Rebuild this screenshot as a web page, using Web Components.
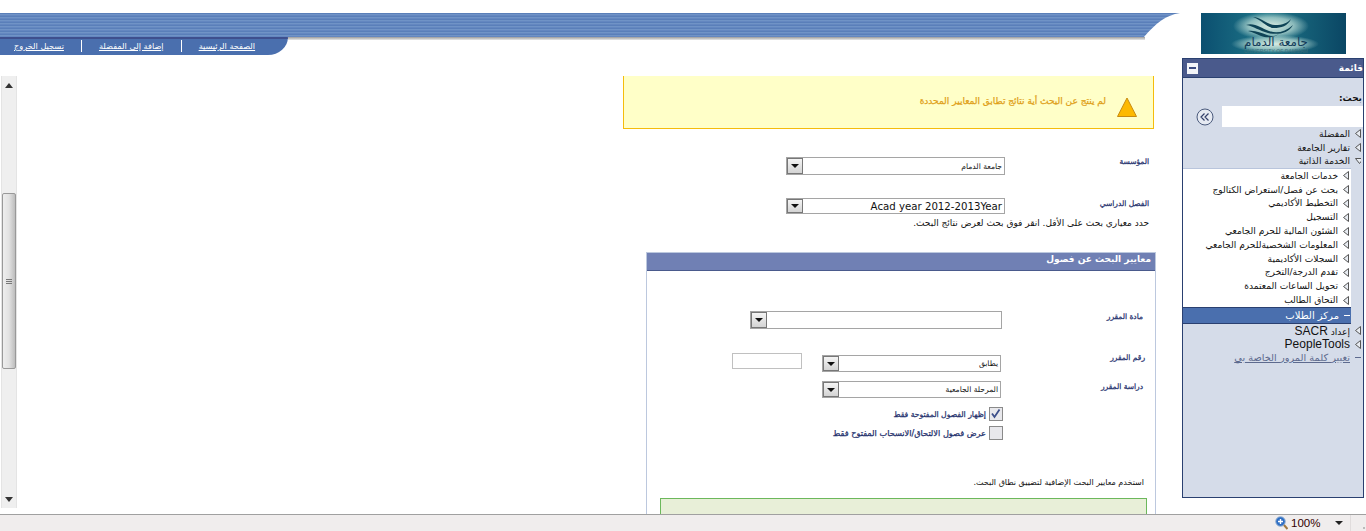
<!DOCTYPE html>
<html lang="ar">
<head>
<meta charset="utf-8">
<title>Class search</title>
<style>
    html, body { margin: 0; height: 100%; background: #fff; }
    body { overflow: hidden; font-family: "Liberation Sans", "DejaVu Sans", sans-serif; font-size: 10px; }
</style>
</head>
<body>
<page-shell>
    <site-header slot="header"></site-header>
    <v-scrollbar slot="scrollbar"></v-scrollbar>

    <alert-box slot="content">لم ينتج عن البحث أية نتائج تطابق المعايير المحددة</alert-box>
    <form-row slot="content" label="المؤسسة" label-width="149" label-pad="5" label-top="-1" gap="20" top="28">
        <drop-select width="219" height="18" value="جامعة الدمام"></drop-select>
    </form-row>
    <form-row slot="content" label="الفصل الدراسي" label-width="149" label-pad="5" gap="21" top="23">
        <drop-select width="219" height="16" latin value="Acad year 2012-2013Year"></drop-select>
    </form-row>
    <hint-text slot="content" right="5" top="3" size="9">حدد معياري بحث على الأقل. انقر فوق بحث لعرض نتائج البحث.</hint-text>

    <search-panel slot="content" heading="معايير البحث عن فصول">
        <form-row label="مادة المقرر" label-width="153" label-pad="12" gap="18" top="40">
            <drop-select width="252" height="18"></drop-select>
        </form-row>
        <form-row label="رقم المقرر" label-width="154" label-pad="10" label-top="-3" gap="20" top="26">
            <drop-select width="179" height="17" value="يطابق"></drop-select>
            <text-box></text-box>
        </form-row>
        <form-row label="دراسة المقرر" label-width="154" label-pad="12" gap="19" top="9">
            <drop-select width="179" height="17" value="المرحلة الجامعية"></drop-select>
        </form-row>
        <check-row checked top="9" size="7.7">إظهار الفصول المفتوحة فقط</check-row>
        <check-row top="5" size="8.2">عرض فصول الالتحاق/الانسحاب المفتوح فقط</check-row>
        <hint-text right="11" top="37" size="8">استخدم معايير البحث الإضافية لتضييق نطاق البحث.</hint-text>
        <green-box></green-box>
    </search-panel>

    <uni-logo slot="logo"></uni-logo>
    <side-menu slot="side"></side-menu>
    <status-bar slot="status"></status-bar>
</page-shell>

<script>
/**
 * Page grid: left column, right column, status bar
 */
class PageShell extends HTMLElement {
    constructor() {
        super();
        this.attachShadow({ mode: 'open' });
    }

    connectedCallback() {
        this.shadowRoot.innerHTML = `
            <style>
                :host {
                    display: grid;
                    grid-template-columns: 1182px 184px;
                    grid-template-rows: 514px 17px;
                    height: 531px;
                    overflow: hidden;
                }
                .left { display: flex; flex-direction: column; overflow: hidden; }
                .main { display: flex; flex: 1; min-height: 0; margin-top: 21px; }
                .content {
                    flex: 1;
                    direction: rtl;
                    display: flex;
                    flex-direction: column;
                    padding-right: 28px;
                    overflow: hidden;
                }
                ::slotted(*) { flex-shrink: 0; }
                .right { display: flex; flex-direction: column; }
                .status { grid-column: 1 / 3; }
            </style>
            <div class="left">
                <slot name="header"></slot>
                <div class="main">
                    <slot name="scrollbar"></slot>
                    <div class="content"><slot name="content"></slot></div>
                </div>
            </div>
            <div class="right">
                <slot name="logo"></slot>
                <slot name="side"></slot>
            </div>
            <div class="status"><slot name="status"></slot></div>
        `;
    }
}

/**
 * Striped band with the link tab below it
 */
class SiteHeader extends HTMLElement {
    constructor() {
        super();
        this.attachShadow({ mode: 'open' });
    }

    connectedCallback() {
        this.shadowRoot.innerHTML = `
            <style>
                :host { display: block; padding-top: 13px; }
                .band {
                    height: 24px;
                    width: 1180px;
                    background: repeating-linear-gradient(180deg, #5a7fb9 0 1px, #7093c6 1px 2px, #6487c0 2px 3px);
                    clip-path: path('M0 0H1180C1166 2 1156 10 1144 24H0Z');
                }
                .under { display: flex; }
                .tab {
                    width: 288px;
                    height: 18px;
                    box-sizing: border-box;
                    background: #4a6fae;
                    border-top: 2px solid #3e4f8e;
                    border-bottom-right-radius: 20px 18px;
                    direction: rtl;
                    display: flex;
                    justify-content: flex-end;
                    align-items: center;
                    padding: 0 0 2px 14px;
                    font-family: "DejaVu Sans", sans-serif;
                    font-size: 8.2px;
                }
                a { color: #fff; text-decoration: underline; white-space: nowrap; }
                i { width: 1px; height: 12px; background: #fff; margin: 0 17px; }
                .shade { width: 857px; height: 3px; background: linear-gradient(#9b9b9b, #e8e8e8); }
            </style>
            <div class="band"></div>
            <div class="under">
                <div class="tab">
                    <a href="#">الصفحة الرئيسية</a><i></i>
                    <a href="#">إضافة إلى المفضلة</a><i></i>
                    <a href="#">تسجيل الخروج</a>
                </div>
                <div class="shade"></div>
            </div>
        `;
    }
}

class VScrollbar extends HTMLElement {
    constructor() {
        super();
        this.attachShadow({ mode: 'open' });
    }

    connectedCallback() {
        this.shadowRoot.innerHTML = `
            <style>
                :host {
                    display: flex;
                    flex-direction: column;
                    box-sizing: border-box;
                    width: 16px;
                    height: 432px;
                    margin-left: 1px;
                    background: #efefef;
                    border: solid #e4e4e4;
                    border-width: 0 1px;
                    align-items: stretch;
                }
                .arrow { height: 18px; display: flex; align-items: center; justify-content: center; }
                .track { flex: 1; padding-top: 99px; }
                .thumb {
                    height: 176px;
                    box-sizing: border-box;
                    border: 1px solid #999;
                    border-radius: 2px;
                    background: linear-gradient(90deg, #eee, #e2e2e2 50%, #bdbdbd);
                    display: flex;
                    align-items: center;
                    justify-content: center;
                }
                .grip { width: 6px; height: 5px; background: repeating-linear-gradient(180deg, #777 0 1px, transparent 1px 2px); }
            </style>
            <div class="arrow"><svg width="8" height="5"><path d="M4 0L8 5H0Z" fill="#333"/></svg></div>
            <div class="track"><div class="thumb"><div class="grip"></div></div></div>
            <div class="arrow"><svg width="8" height="5"><path d="M0 0H8L4 5Z" fill="#333"/></svg></div>
        `;
    }
}

class AlertBox extends HTMLElement {
    constructor() {
        super();
        this.attachShadow({ mode: 'open' });
    }

    connectedCallback() {
        this.shadowRoot.innerHTML = `
            <style>
                :host {
                    display: flex;
                    box-sizing: border-box;
                    width: 531px;
                    height: 53px;
                    background: #ffffc8;
                    border: 1px solid #f5bc0c;
                    border-top: 0;
                    padding: 19px 16px 0 0;
                    align-items: flex-start;
                    gap: 11px;
                    color: #e0a018;
                    font-family: "DejaVu Sans", sans-serif;
                    font-size: 9px;
                    line-height: 12px;
                    -webkit-text-stroke: .25px #e0a018;
                }
                svg { margin-top: 2px; flex: none; }
            </style>
            <svg width="20" height="20"><path d="M10 1L19.5 19.5H.5Z" fill="#fdb900" stroke="#c78a10"/></svg>
            <span><slot></slot></span>
        `;
    }
}

/**
 * Label on the right, controls to the left of it
 */
class FormRow extends HTMLElement {
    constructor() {
        super();
        this.attachShadow({ mode: 'open' });
    }

    connectedCallback() {
        const width = this.getAttribute('label-width');
        const pad = this.getAttribute('label-pad') || 5;
        const labelTop = this.getAttribute('label-top') || 0;
        const top = this.getAttribute('top') || 0;
        const gap = this.getAttribute('gap') || 20;
        this.shadowRoot.innerHTML = `
            <style>
                :host { display: flex; margin-top: ${top}px; align-items: flex-start; }
                label {
                    box-sizing: border-box;
                    width: ${width}px;
                    flex: none;
                    margin-top: ${labelTop}px;
                    padding-right: ${pad}px;
                    color: #24306c;
                    font-family: "DejaVu Sans", sans-serif;
                    font-size: 7.5px;
                    line-height: 12px;
                    -webkit-text-stroke: .25px #24306c;
                }
                .controls { display: flex; gap: ${gap}px; align-items: flex-start; }
            </style>
            <label>${this.getAttribute('label')}</label>
            <div class="controls"><slot></slot></div>
        `;
    }
}

class DropSelect extends HTMLElement {
    constructor() {
        super();
        this.attachShadow({ mode: 'open' });
    }

    connectedCallback() {
        const latin = this.hasAttribute('latin');
        this.shadowRoot.innerHTML = `
            <style>
                :host {
                    display: flex;
                    box-sizing: border-box;
                    width: ${this.getAttribute('width')}px;
                    height: ${this.getAttribute('height')}px;
                    border: 1px solid #a5a5a5;
                    background: #fff;
                    align-items: center;
                    color: #111;
                    font-family: "DejaVu Sans", sans-serif;
                    font-size: ${latin ? 10.2 : 7.6}px;
                }
                span { flex: 1; padding: 0 2px; white-space: nowrap; overflow: hidden; }
                b {
                    flex: none;
                    align-self: stretch;
                    width: 16px;
                    box-sizing: border-box;
                    border: 1px solid #777;
                    background: linear-gradient(#f4f4f4, #d4d4d4);
                    display: flex;
                    align-items: center;
                    justify-content: center;
                }
            </style>
            <span>${this.getAttribute('value') || ''}</span>
            <b><svg width="8" height="4"><path d="M0 0H8L4 4Z" fill="#111"/></svg></b>
        `;
    }
}

class TextBox extends HTMLElement {
    constructor() {
        super();
        this.attachShadow({ mode: 'open' });
    }

    connectedCallback() {
        this.shadowRoot.innerHTML = `
            <style>
                :host {
                    display: block;
                    box-sizing: border-box;
                    width: 70px;
                    height: 16px;
                    margin-top: -2px;
                    border: 1px solid #c0c0c0;
                    background: #fff;
                }
            </style>
        `;
    }
}

class HintText extends HTMLElement {
    constructor() {
        super();
        this.attachShadow({ mode: 'open' });
    }

    connectedCallback() {
        this.shadowRoot.innerHTML = `
            <style>
                :host {
                    display: block;
                    margin-top: ${this.getAttribute('top') || 0}px;
                    padding-right: ${this.getAttribute('right') || 0}px;
                    color: #111;
                    font-family: "DejaVu Sans", sans-serif;
                    font-size: ${this.getAttribute('size') || 9}px;
                    line-height: 12px;
                }
            </style>
            <slot></slot>
        `;
    }
}

class SearchPanel extends HTMLElement {
    constructor() {
        super();
        this.attachShadow({ mode: 'open' });
    }

    connectedCallback() {
        this.shadowRoot.innerHTML = `
            <style>
                :host {
                    display: block;
                    box-sizing: border-box;
                    width: 510px;
                    margin: 23px -2px 0 0;
                    border: solid #bcc8de;
                    border-width: 1px 1px 0;
                }
                .head {
                    height: 18px;
                    box-sizing: border-box;
                    background: #7080b4;
                    border-bottom: 1px solid #4a5a8c;
                    color: #fff;
                    padding-right: 4px;
                    font-family: "DejaVu Sans", sans-serif;
                    font-size: 9px;
                    font-weight: bold;
                    line-height: 13px;
                }
            </style>
            <div class="head">${this.getAttribute('heading')}</div>
            <slot></slot>
        `;
    }
}

class CheckRow extends HTMLElement {
    constructor() {
        super();
        this.attachShadow({ mode: 'open' });
    }

    connectedCallback() {
        const tick = this.hasAttribute('checked')
            ? '<path d="M3 6.5L5.5 10L10.5 2.5" fill="none" stroke="#3d4f8a" stroke-width="1.8"/>' : '';
        this.shadowRoot.innerHTML = `
            <style>
                :host {
                    display: flex;
                    margin-top: ${this.getAttribute('top') || 0}px;
                    padding-right: 152px;
                    gap: 3px;
                    align-items: center;
                    color: #24306c;
                    font-family: "DejaVu Sans", sans-serif;
                    font-size: ${this.getAttribute('size') || 8}px;
                    -webkit-text-stroke: .25px #24306c;
                }
                svg { flex: none; }
            </style>
            <svg width="14" height="14">
                <rect x=".5" y=".5" width="13" height="13" fill="#e8e8ec" stroke="#8a8a8a"/>
                ${tick}
            </svg>
            <span><slot></slot></span>
        `;
    }
}

class GreenBox extends HTMLElement {
    constructor() {
        super();
        this.attachShadow({ mode: 'open' });
    }

    connectedCallback() {
        this.shadowRoot.innerHTML = `
            <style>
                :host {
                    display: block;
                    box-sizing: border-box;
                    width: 487px;
                    height: 40px;
                    margin: 9px 8px 0 0;
                    background: #e8efd8;
                    border: 1px solid #6cb85c;
                }
            </style>
        `;
    }
}

class UniLogo extends HTMLElement {
    constructor() {
        super();
        this.attachShadow({ mode: 'open' });
    }

    connectedCallback() {
        this.shadowRoot.innerHTML = `
            <style>
                :host { display: block; height: 58px; padding: 13px 0 0 19px; box-sizing: border-box; }
                svg { display: block; }
            </style>
            <svg width="145" height="41" viewBox="0 0 145 41">
                <defs>
                    <linearGradient id="sea" x1="0" x2="1" y1="0" y2="0">
                        <stop offset="0" stop-color="#0b4f70"/>
                        <stop offset=".45" stop-color="#1f7688"/>
                        <stop offset="1" stop-color="#0a4664"/>
                    </linearGradient>
                    <radialGradient id="glow" cx=".5" cy=".5" r=".5">
                        <stop offset="0" stop-color="#e4f2e6" stop-opacity=".95"/>
                        <stop offset=".6" stop-color="#bfe0d8" stop-opacity=".7"/>
                        <stop offset="1" stop-color="#bfe0d8" stop-opacity="0"/>
                    </radialGradient>
                </defs>
                <rect width="145" height="41" fill="url(#sea)"/>
                <ellipse cx="70" cy="13" rx="38" ry="14" fill="url(#glow)"/>
                <ellipse cx="74" cy="31" rx="44" ry="9" fill="url(#glow)"/>
                <path d="M52 4C60 4 66 12 74 12S86 10 90 6C87 13 80 15 73 15S61 7 52 4Z" fill="#0e4356"/>
                <path d="M45 12C53 9 60 15 68 18S84 19 92 12C87 21 76 22 67 20S53 13 45 12Z" fill="#0e4356"/>
                <path d="M47 18C54 17 60 20 66 22S74 23 78 21C72 25 65 25 60 23S52 19 47 18Z" fill="#0e4356"/>
                <text x="75" y="33" text-anchor="middle" textLength="64" lengthAdjust="spacingAndGlyphs" font-family="DejaVu Sans, sans-serif" font-size="12" fill="#123a58">جامعة الدمام</text>
                <text x="75" y="40" text-anchor="middle" textLength="64" font-family="Liberation Sans, sans-serif" font-size="5" fill="#3d6e7a">UNIVERSITY OF DAMMAM</text>
            </svg>
        `;
    }
}

/**
 * One menu line: arrow (closed/open/dash) and its label
 */
class MenuItem extends HTMLElement {
    constructor() {
        super();
        this.attachShadow({ mode: 'open' });
    }

    connectedCallback() {
        const icons = {
            closed: '<svg width="6" height="9"><path d="M5.5 .5V8.5L.5 4.5Z" fill="#e8ecf2" stroke="#555"/></svg>',
            open: '<svg width="9" height="6"><path d="M.5 .5H8.5L4.5 5.5Z" fill="#e8ecf2" stroke="#555"/></svg>',
            dash: '<svg width="6" height="9"><path d="M0 4.5H6" stroke="currentColor"/></svg>'
        };
        const kind = this.getAttribute('icon') || 'closed';
        this.shadowRoot.innerHTML = `
            <style>
                :host {
                    display: flex;
                    height: ${this.getAttribute('h') || 13.8}px;
                    align-items: center;
                    white-space: nowrap;
                    font-family: "DejaVu Sans", sans-serif;
                    font-size: 9.1px;
                    color: #111;
                }
                .ico { width: 6px; flex: none; display: flex; justify-content: center; }
                .txt { margin-right: 5px; }
                :host([link]) .txt { text-decoration: underline; }
                ::slotted(b) { font-family: "Liberation Sans", sans-serif; font-size: 12px; font-weight: normal; }
            </style>
            <span class="ico">${icons[kind]}</span>
            <span class="txt"><slot></slot></span>
        `;
    }
}

class SideMenu extends HTMLElement {
    constructor() {
        super();
        this.attachShadow({ mode: 'open' });
    }

    connectedCallback() {
        this.shadowRoot.innerHTML = `
            <style>
                :host {
                    display: flex;
                    flex-direction: column;
                    box-sizing: border-box;
                    width: 182px;
                    height: 440px;
                    border: 1px solid #2a4070;
                    background: #d5dce9;
                    direction: rtl;
                    font-family: "DejaVu Sans", sans-serif;
                }
                .head {
                    height: 19px;
                    flex: none;
                    box-sizing: border-box;
                    background: #4a5a8c;
                    border-bottom: 1px solid #2a4070;
                    color: #fff;
                    display: flex;
                    justify-content: space-between;
                    align-items: center;
                    padding: 0 0 0 4px;
                    font-size: 9px;
                    font-weight: bold;
                }
                .toggle {
                    width: 11px;
                    height: 11px;
                    background: #f2f4f8;
                    display: flex;
                    align-items: center;
                    justify-content: center;
                }
                .toggle i { width: 7px; height: 2px; background: #3c4c80; }
                .find { padding: 14px 1px 0 0; font-size: 9px; font-weight: bold; color: #111; line-height: 12px; }
                .search { display: flex; align-items: center; margin-top: 2px; height: 21px; }
                .search div { width: 141px; height: 21px; background: #fff; flex: none; }
                .search svg { margin-right: 8px; }
                .top { padding-right: 2px; }
                .sub {
                    background: #fff;
                    border-top: 1px solid #b9c5dc;
                    width: 168px;
                    padding-right: 2px;
                    box-sizing: border-box;
                    margin-right: 12px;
                    color: #111;
                }
                .current {
                    margin-right: 12px;
                    width: 168px;
                    box-sizing: border-box;
                    height: 17px;
                    background: #4a6fae;
                    border-top: 1px solid #2a4070;
                    border-bottom: 1px solid #2a4070;
                    padding-right: 1px;
                }
                .rest { padding-right: 2px; }
            </style>
            <div class="head"><span>قائمة</span><span class="toggle"><i></i></span></div>
            <div class="find">بحث:</div>
            <div class="search">
                <div></div>
                <svg width="18" height="18">
                    <circle cx="9" cy="9" r="8" fill="#e6eaf2" stroke="#4a5a7c"/>
                    <path d="M8.5 5.5L5 9L8.5 12.5M12.5 5.5L9 9L12.5 12.5" fill="none" stroke="#33406a" stroke-width="1.2"/>
                </svg>
            </div>
            <div class="top">
                <menu-item>المفضلة</menu-item>
                <menu-item>تقارير الجامعة</menu-item>
                <menu-item icon="open" h="13.4">الخدمة الذاتية</menu-item>
            </div>
            <div class="sub">
                <menu-item>خدمات الجامعة</menu-item>
                <menu-item>بحث عن فصل/استعراض الكتالوج</menu-item>
                <menu-item>التخطيط الأكاديمي</menu-item>
                <menu-item>التسجيل</menu-item>
                <menu-item>الشئون المالية للحرم الجامعي</menu-item>
                <menu-item>المعلومات الشخصيةللحرم الجامعي</menu-item>
                <menu-item>السجلات الأكاديمية</menu-item>
                <menu-item>تقدم الدرجة/التخرج</menu-item>
                <menu-item>تحويل الساعات المعتمدة</menu-item>
                <menu-item>التحاق الطالب</menu-item>
            </div>
            <div class="current"><menu-item icon="dash" h="15" style="color:#fff;font-size:10px">مركز الطلاب</menu-item></div>
            <div class="rest">
                <menu-item h="13.4">إعداد <b>SACR</b></menu-item>
                <menu-item h="13.4"><b>PeopleTools</b></menu-item>
                <menu-item h="13.4" icon="dash" link style="color:#5d6a8e;font-size:9.8px">تغيير كلمة المرور الخاصة بي</menu-item>
            </div>
        `;
    }
}

class StatusBar extends HTMLElement {
    constructor() {
        super();
        this.attachShadow({ mode: 'open' });
    }

    connectedCallback() {
        this.shadowRoot.innerHTML = `
            <style>
                :host {
                    display: flex;
                    box-sizing: border-box;
                    height: 17px;
                    background: #f0eded;
                    border-top: 1px solid #a0a0a0;
                    align-items: center;
                    justify-content: flex-end;
                    font-family: "Liberation Sans", sans-serif;
                    font-size: 11.5px;
                    color: #300;
                }
                .zoom { margin-left: 3px; }
                .pct { margin-left: 3px; width: 44px; }
                .drop { margin-right: 7px; }
                .sep { width: 1px; height: 16px; background: #e0dcdc; margin-right: 5px; }
                .grip { width: 10px; height: 16px; background: radial-gradient(circle at 8px 13px, #bbb 1px, transparent 1.5px); }
            </style>
            <svg class="zoom" width="13" height="15">
                <circle cx="5.5" cy="5.5" r="4.8" fill="#2f6fc4" stroke="#9ab4d4"/>
                <path d="M3 5.5H8M5.5 3V8" stroke="#fff" stroke-width="1.4"/>
                <path d="M9 9L12.5 13" stroke="#a07840" stroke-width="2"/>
            </svg>
            <span class="pct">100%</span>
            <svg class="drop" width="8" height="4"><path d="M0 0H8L4 4Z" fill="#222"/></svg>
            <span class="sep"></span>
            <span class="grip"></span>
        `;
    }
}

customElements.define('page-shell', PageShell);
customElements.define('site-header', SiteHeader);
customElements.define('v-scrollbar', VScrollbar);
customElements.define('alert-box', AlertBox);
customElements.define('form-row', FormRow);
customElements.define('drop-select', DropSelect);
customElements.define('text-box', TextBox);
customElements.define('hint-text', HintText);
customElements.define('search-panel', SearchPanel);
customElements.define('check-row', CheckRow);
customElements.define('green-box', GreenBox);
customElements.define('uni-logo', UniLogo);
customElements.define('menu-item', MenuItem);
customElements.define('side-menu', SideMenu);
customElements.define('status-bar', StatusBar);
</script>
</body>
</html>
